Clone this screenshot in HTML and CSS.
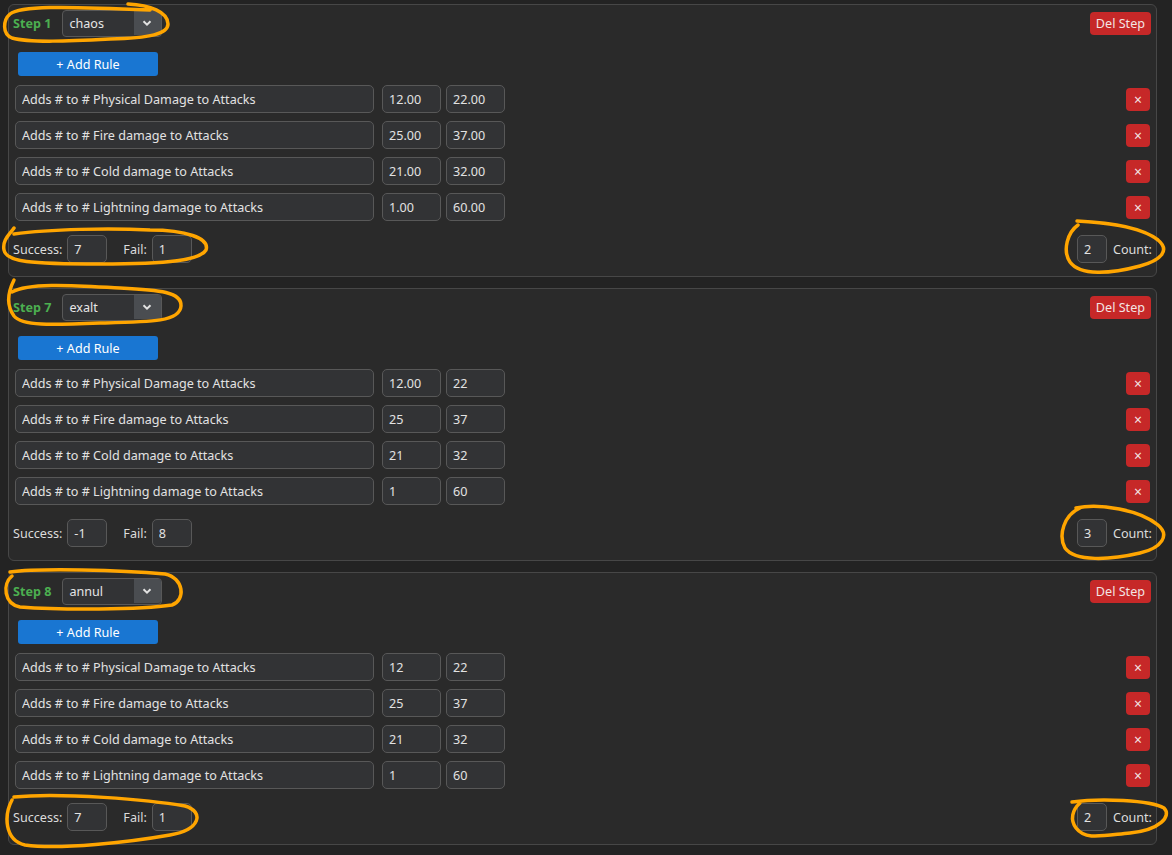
FILE: index.html
```html
<!DOCTYPE html>
<html lang="en">
<head>
    <meta charset="UTF-8">
    <title>Craft Steps</title>
    <link rel="stylesheet" href="styles.css">
</head>
<body>
<div class="steps">

  <!-- step 1 -->
  <div class="step">
    <div class="step-head">
      <span class="step-name">Step 1</span>
      <div class="select-wrap">
        <select>
          <option selected>chaos</option>
          <option>exalt</option>
          <option>annul</option>
        </select>
        <span class="select-arrow"><svg width="10" height="6" viewBox="0 0 10 6"><path d="M1.5 1.2 L5 4.6 L8.5 1.2" fill="none" stroke="#e2e2e2" stroke-width="2"/></svg></span>
      </div>
      <button type="button" class="del-step">Del Step</button>
    </div>
    <button type="button" class="add-rule">+ Add Rule</button>
    <div class="rules">
      <div class="rule">
        <input class="field field-text" type="text" value="Adds # to # Physical Damage to Attacks">
        <input class="field field-num" type="text" value="12.00">
        <input class="field field-num" type="text" value="22.00">
        <button type="button" class="del-rule">×</button>
      </div>
      <div class="rule">
        <input class="field field-text" type="text" value="Adds # to # Fire damage to Attacks">
        <input class="field field-num" type="text" value="25.00">
        <input class="field field-num" type="text" value="37.00">
        <button type="button" class="del-rule">×</button>
      </div>
      <div class="rule">
        <input class="field field-text" type="text" value="Adds # to # Cold damage to Attacks">
        <input class="field field-num" type="text" value="21.00">
        <input class="field field-num" type="text" value="32.00">
        <button type="button" class="del-rule">×</button>
      </div>
      <div class="rule">
        <input class="field field-text" type="text" value="Adds # to # Lightning damage to Attacks">
        <input class="field field-num" type="text" value="1.00">
        <input class="field field-num" type="text" value="60.00">
        <button type="button" class="del-rule">×</button>
      </div>
    </div>
    <div class="step-foot">
      <label>Success:</label>
      <input class="field field-small" type="text" value="7">
      <label class="fail-label">Fail:</label>
      <input class="field field-small" type="text" value="1">
      <div class="count">
        <input class="field field-count" type="text" value="2">
        <label>Count:</label>
      </div>
    </div>
  </div>

  <!-- step 7 -->
  <div class="step">
    <div class="step-head">
      <span class="step-name">Step 7</span>
      <div class="select-wrap">
        <select>
          <option>chaos</option>
          <option selected>exalt</option>
          <option>annul</option>
        </select>
        <span class="select-arrow"><svg width="10" height="6" viewBox="0 0 10 6"><path d="M1.5 1.2 L5 4.6 L8.5 1.2" fill="none" stroke="#e2e2e2" stroke-width="2"/></svg></span>
      </div>
      <button type="button" class="del-step">Del Step</button>
    </div>
    <button type="button" class="add-rule">+ Add Rule</button>
    <div class="rules">
      <div class="rule">
        <input class="field field-text" type="text" value="Adds # to # Physical Damage to Attacks">
        <input class="field field-num" type="text" value="12.00">
        <input class="field field-num" type="text" value="22">
        <button type="button" class="del-rule">×</button>
      </div>
      <div class="rule">
        <input class="field field-text" type="text" value="Adds # to # Fire damage to Attacks">
        <input class="field field-num" type="text" value="25">
        <input class="field field-num" type="text" value="37">
        <button type="button" class="del-rule">×</button>
      </div>
      <div class="rule">
        <input class="field field-text" type="text" value="Adds # to # Cold damage to Attacks">
        <input class="field field-num" type="text" value="21">
        <input class="field field-num" type="text" value="32">
        <button type="button" class="del-rule">×</button>
      </div>
      <div class="rule">
        <input class="field field-text" type="text" value="Adds # to # Lightning damage to Attacks">
        <input class="field field-num" type="text" value="1">
        <input class="field field-num" type="text" value="60">
        <button type="button" class="del-rule">×</button>
      </div>
    </div>
    <div class="step-foot">
      <label>Success:</label>
      <input class="field field-small" type="text" value="-1">
      <label class="fail-label">Fail:</label>
      <input class="field field-small" type="text" value="8">
      <div class="count">
        <input class="field field-count" type="text" value="3">
        <label>Count:</label>
      </div>
    </div>
  </div>

  <!-- step 8 -->
  <div class="step">
    <div class="step-head">
      <span class="step-name">Step 8</span>
      <div class="select-wrap">
        <select>
          <option>chaos</option>
          <option>exalt</option>
          <option selected>annul</option>
        </select>
        <span class="select-arrow"><svg width="10" height="6" viewBox="0 0 10 6"><path d="M1.5 1.2 L5 4.6 L8.5 1.2" fill="none" stroke="#e2e2e2" stroke-width="2"/></svg></span>
      </div>
      <button type="button" class="del-step">Del Step</button>
    </div>
    <button type="button" class="add-rule">+ Add Rule</button>
    <div class="rules">
      <div class="rule">
        <input class="field field-text" type="text" value="Adds # to # Physical Damage to Attacks">
        <input class="field field-num" type="text" value="12">
        <input class="field field-num" type="text" value="22">
        <button type="button" class="del-rule">×</button>
      </div>
      <div class="rule">
        <input class="field field-text" type="text" value="Adds # to # Fire damage to Attacks">
        <input class="field field-num" type="text" value="25">
        <input class="field field-num" type="text" value="37">
        <button type="button" class="del-rule">×</button>
      </div>
      <div class="rule">
        <input class="field field-text" type="text" value="Adds # to # Cold damage to Attacks">
        <input class="field field-num" type="text" value="21">
        <input class="field field-num" type="text" value="32">
        <button type="button" class="del-rule">×</button>
      </div>
      <div class="rule">
        <input class="field field-text" type="text" value="Adds # to # Lightning damage to Attacks">
        <input class="field field-num" type="text" value="1">
        <input class="field field-num" type="text" value="60">
        <button type="button" class="del-rule">×</button>
      </div>
    </div>
    <div class="step-foot">
      <label>Success:</label>
      <input class="field field-small" type="text" value="7">
      <label class="fail-label">Fail:</label>
      <input class="field field-small" type="text" value="1">
      <div class="count">
        <input class="field field-count" type="text" value="2">
        <label>Count:</label>
      </div>
    </div>
  </div>

</div>

<!-- hand-drawn highlight marks over the page -->
<svg class="marks" width="1172" height="855" viewBox="0 0 1172 855">
  <path d="M128 4 C150 5, 168 12, 168 24 C168 34, 150 38, 110 39 C70 41, 30 43, 12 38 C2 34, 3 20, 10 14 C20 6, 60 6, 150 10"/>
  <path d="M14 228 C10 234, 2 240, 4 250 C6 262, 30 264, 100 264 C170 264, 200 260, 206 250 C210 238, 185 230, 150 230 C110 228, 50 229, 14 234"/>
  <path d="M1077 221 C1100 222, 1140 226, 1158 240 C1170 250, 1162 260, 1140 266 C1110 274, 1080 276, 1070 262 C1062 250, 1068 232, 1078 225"/>
  <path d="M14 280 C8 292, 6 305, 14 316 C22 326, 50 325, 100 323 C150 322, 180 322, 181 306 C182 292, 160 290, 120 288 C80 286, 30 282, 12 292"/>
  <path d="M1076 508 C1100 503, 1140 510, 1158 525 C1170 535, 1162 548, 1140 553 C1110 560, 1075 562, 1065 548 C1058 535, 1064 515, 1080 508"/>
  <path d="M10 572 C40 568, 120 570, 165 574 C184 578, 186 600, 172 605 C140 610, 60 610, 20 607 C4 604, 2 584, 12 576"/>
  <path d="M14 797 C60 792, 150 800, 185 806 C205 812, 200 830, 170 835 C130 842, 60 850, 25 845 C4 840, 4 815, 12 800"/>
  <path d="M1072 802 C1100 798, 1150 800, 1164 808 C1172 816, 1160 830, 1130 833 C1100 836, 1085 840, 1076 828 C1070 820, 1072 810, 1080 803"/>
</svg>
</body>
</html>
```

FILE: styles.css
```css
body{
  margin: 0;
  background: #232323;
  font-family: "Noto Sans", "Liberation Sans", sans-serif;
  font-size: 12.6px;
  color: #dcdcdc;
}

.steps{
  display: flex;
  flex-direction: column;
  gap: 11px;
  padding: 4px 15px 0 8px;
}

.step{
  background: #2a2a2a;
  border: 1px solid #474747;
  border-radius: 6px;
  padding: 4px 4px 13px 4px;
}

.step-head{
  display: flex;
  align-items: center;
  height: 28px;
}

.step-name{
  color: #4caf50;
  font-weight: 700;
  margin-right: 11px;
}

.select-wrap{
  position: relative;
  width: 100px;
  height: 27px;
}

.select-wrap select{
  appearance: none;
  -webkit-appearance: none;
  box-sizing: border-box;
  width: 100%;
  height: 100%;
  background: #323335;
  border: 1.5px solid #585858;
  border-radius: 4px;
  color: #e6e6e6;
  font: inherit;
  padding: 0 0 0 6px;
  outline: none;
}

.select-arrow{
  position: absolute;
  right: 1.5px;
  top: 1.5px;
  bottom: 1.5px;
  width: 27px;
  background: #4a4d51;
  border-radius: 0 3px 3px 0;
  display: flex;
  align-items: center;
  justify-content: center;
  pointer-events: none;
}

.del-step{
  margin-left: auto;
  height: 23px;
  padding: 0 6px;
  margin-right: 1px;
  background: #c62828;
  color: #f3e4e4;
  border: 0;
  border-radius: 4px;
  font: inherit;
}

.add-rule{
  display: block;
  width: 140px;
  height: 24px;
  margin: 15px 0 9px 5px;
  background: #1976d2;
  color: #fff;
  border: 0;
  border-radius: 3px;
  font: inherit;
}

.rules{
  display: flex;
  flex-direction: column;
  gap: 8px;
  padding: 0 2px;
}

.rule{
  display: flex;
  align-items: center;
  height: 28px;
}

.field{
  box-sizing: border-box;
  height: 28px;
  background: #323335;
  border: 1.5px solid #585858;
  border-radius: 5px;
  color: #e2e2e2;
  font: inherit;
  padding: 0 6px;
  outline: none;
}

.field-text{
  width: 359px;
}

.field-num{
  width: 59px;
  margin-left: 5px;
}

.field-text + .field-num{
  margin-left: 8px;
}

.del-rule{
  margin-left: auto;
  width: 24px;
  height: 23px;
  padding: 0;
  background: #c62828;
  color: #f3e4e4;
  border: 0;
  border-radius: 4px;
  font: inherit;
  font-size: 14px;
}

.step-foot{
  display: flex;
  align-items: center;
  height: 28px;
  margin-top: 14px;
}

.field-small{
  width: 40px;
  margin-left: 5px;
}

.fail-label{
  margin-left: 16px;
}

.count{
  margin-left: auto;
  display: flex;
  align-items: center;
  gap: 6px;
}

.field-count{
  width: 30px;
}

.marks{
  position: absolute;
  top: 0;
  left: 0;
  pointer-events: none;
}

.marks path{
  fill: none;
  stroke: #ffa500;
  stroke-width: 3.5;
  stroke-linecap: round;
  stroke-linejoin: round;
}
```
